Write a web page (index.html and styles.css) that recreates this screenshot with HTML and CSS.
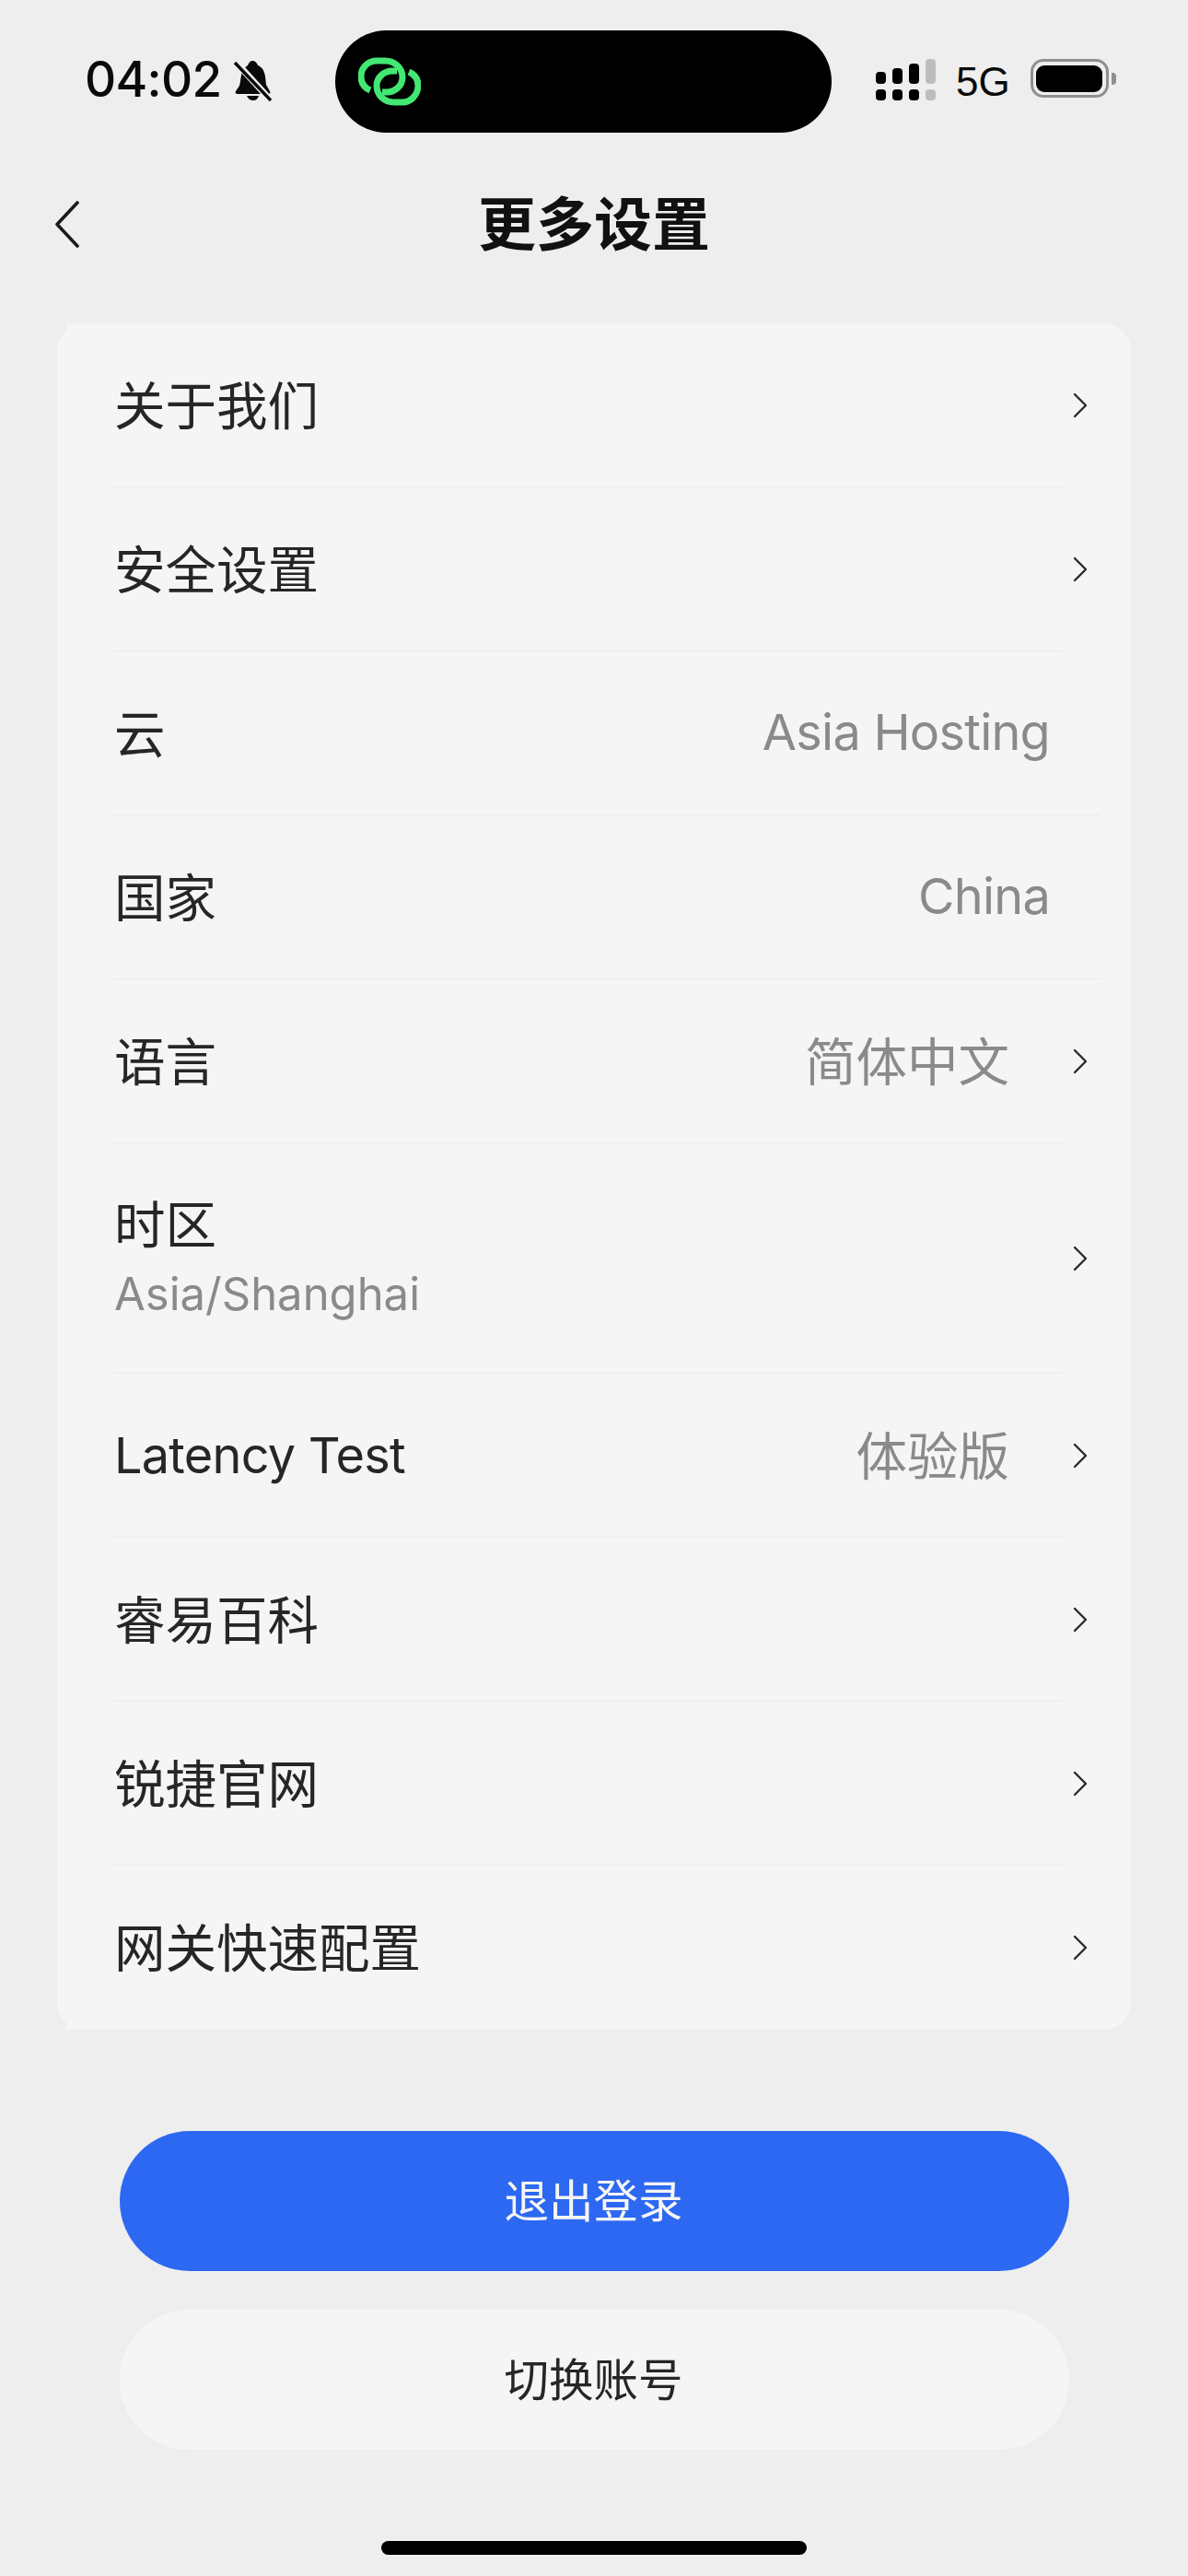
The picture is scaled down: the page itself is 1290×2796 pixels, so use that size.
FILE: index.html
```html
<!DOCTYPE html>
<html lang="zh-CN">
  <head>
    <meta charset="UTF-8" />
    <meta name="viewport" content="width=device-width, initial-scale=1.0" />
    <title>更多设置</title>
    <link rel="stylesheet" href="styles.css">
  </head>

  <body>
    <div class="phone">
      <header class="status-bar">
        <div class="status-left">
          <span class="clock">04:02</span>
          <svg class="bell" viewBox="0 0 41 45" aria-hidden="true">
            <path d="M20 1c3 0 5 2 6 5 5 2 7 6 8 12l1 9 4 7c1 2 0 3-2 3H4c-2 0-3-1-2-3l4-6c1-3 1-7 2-11 1-6 4-9 7-11 1-3 3-5 5-5z" />
            <path d="M14 39h13c-1 3-3 5-6 5s-6-2-7-5z" />
            <path class="bell-gap" d="M0 0l41 45" />
            <path class="bell-slash" d="M1 3l39 41" />
          </svg>
        </div>
        <div class="island">
          <svg class="island-icon" viewBox="0 0 68 53" aria-hidden="true">
            <path d="M13 36C6 33 3 27 3 21 3 11 11 4 20 4h9c11 0 19 8 19 18 0 9-8 16-17 16h-5" />
            <path d="M55 16c7 3 10 9 10 15 0 10-8 18-17 18h-9C28 49 20 41 20 31c0-9 8-16 17-16h5" />
          </svg>
        </div>
        <div class="status-right">
          <div class="signal">
            <span class="bar bar-1"></span>
            <span class="bar bar-2"></span>
            <span class="bar bar-3"></span>
            <span class="bar bar-4 off"></span>
          </div>
          <span class="network">5G</span>
          <div class="battery"><span class="battery-level"></span></div>
          <span class="battery-nub"></span>
        </div>
      </header>

      <nav class="nav-bar">
        <svg class="back" viewBox="0 0 27 51" aria-hidden="true">
          <path d="M25 2L3 25.5 25 49" />
        </svg>
        <h1 class="nav-title">更多设置</h1>
      </nav>

      <section class="card">
        <ul class="settings">
          <li class="row">
            <span class="row-label">关于我们</span>
            <svg class="chevron" viewBox="0 0 16 28"><path d="M2 2l12 12L2 26" /></svg>
          </li>
          <li class="row">
            <span class="row-label">安全设置</span>
            <svg class="chevron" viewBox="0 0 16 28"><path d="M2 2l12 12L2 26" /></svg>
          </li>
          <li class="row row-plain">
            <span class="row-label">云</span>
            <span class="row-value latin">Asia Hosting</span>
          </li>
          <li class="row row-plain">
            <span class="row-label">国家</span>
            <span class="row-value latin">China</span>
          </li>
          <li class="row">
            <span class="row-label">语言</span>
            <span class="row-value">简体中文</span>
            <svg class="chevron" viewBox="0 0 16 28"><path d="M2 2l12 12L2 26" /></svg>
          </li>
          <li class="row row-tall">
            <div class="row-stack">
              <span class="row-label">时区</span>
              <span class="row-sub">Asia/Shanghai</span>
            </div>
            <svg class="chevron" viewBox="0 0 16 28"><path d="M2 2l12 12L2 26" /></svg>
          </li>
          <li class="row">
            <span class="row-label latin">Latency Test</span>
            <span class="row-value">体验版</span>
            <svg class="chevron" viewBox="0 0 16 28"><path d="M2 2l12 12L2 26" /></svg>
          </li>
          <li class="row">
            <span class="row-label">睿易百科</span>
            <svg class="chevron" viewBox="0 0 16 28"><path d="M2 2l12 12L2 26" /></svg>
          </li>
          <li class="row">
            <span class="row-label">锐捷官网</span>
            <svg class="chevron" viewBox="0 0 16 28"><path d="M2 2l12 12L2 26" /></svg>
          </li>
          <li class="row">
            <span class="row-label">网关快速配置</span>
            <svg class="chevron" viewBox="0 0 16 28"><path d="M2 2l12 12L2 26" /></svg>
          </li>
        </ul>
      </section>

      <div class="actions">
        <button class="btn btn-primary" type="button">退出登录</button>
        <button class="btn btn-light" type="button">切换账号</button>
      </div>

      <div class="home-bar"></div>
    </div>
  </body>
</html>
```

FILE: styles.css
```css
*,
*::before,
*::after {
  box-sizing: border-box;
}
:root {
  --bg: #eeeeee;
  --surface: #f5f5f5;
  --primary: #2d68f2;
  --text: #262626;
  --text-light: #8a8a8a;
  --line: #e9e9e9;
  --font: "Inter", "Noto Sans CJK SC", sans-serif;
}
body {
  margin: 0;
  font-family: var(--font);
  background: var(--bg);
  color: var(--text);
}
.phone {
  height: 2796px;
  display: flex;
  flex-direction: column;
}

/* status bar */
.status-bar {
  height: 144px;
  padding: 33px 0 0 92px;
  display: flex;
  align-items: flex-start;
}
.status-left {
  width: 272px;
  height: 111px;
  display: flex;
  align-items: center;
  gap: 14px;
}
.clock {
  font-size: 53px;
  font-weight: 550;
  color: #0a0a0a;
  letter-spacing: -0.7px;
  margin-top: -5px;
}
.bell {
  width: 41px;
  height: 45px;
  margin-top: -3px;
  fill: #0a0a0a;
}
.bell-gap {
  fill: none;
  stroke: var(--bg);
  stroke-width: 7;
}
.bell-slash {
  fill: none;
  stroke: #0a0a0a;
  stroke-width: 3.4;
}
.island {
  width: 539px;
  height: 111px;
  background: #000;
  border-radius: 56px;
  padding: 29px 0 0 25px;
}
.island-icon {
  display: block;
  width: 68px;
  height: 53px;
  fill: none;
  stroke: #42e872;
  stroke-width: 7;
  stroke-linecap: butt;
}
.status-right {
  margin-left: 48px;
  height: 76px;
  padding-top: 31px;
  display: flex;
  align-items: flex-start;
}
.signal {
  width: 65px;
  height: 45px;
  display: flex;
  justify-content: space-between;
  align-items: flex-end;
}
.bar {
  width: 11px;
  border-radius: 4px;
  background: #000;
  position: relative;
  margin-bottom: 18px;
}
.bar::after {
  content: "";
  position: absolute;
  left: 0;
  right: 0;
  bottom: -18px;
  height: 12px;
  border-radius: 4px;
  background: inherit;
}
.bar-1 { height: 13px; }
.bar-2 { height: 17px; }
.bar-3 { height: 22px; }
.bar-4 { height: 27px; }
.off { background: #bdbdbd; }
.network {
  margin-left: 22px;
  font-family: "Liberation Sans", sans-serif;
  font-size: 44px;
  line-height: 44px;
  color: #0a0a0a;
  margin-top: 3px;
}
.battery {
  margin-left: 22px;
  width: 85px;
  height: 42px;
  border: 3.5px solid #8f8f8f;
  border-radius: 14px;
  padding: 3.5px;
}
.battery-level {
  display: block;
  height: 100%;
  background: #000;
  border-radius: 9px;
}
.battery-nub {
  width: 5px;
  height: 13px;
  margin: 15px 0 0 3px;
  background: #8f8f8f;
  border-radius: 0 4px 4px 0;
}

/* nav */
.nav-bar {
  height: 207px;
  padding: 0 0 0 59px;
  display: flex;
  align-items: flex-start;
  position: relative;
}
.back {
  width: 27px;
  height: 51px;
  margin-top: 74px;
  fill: none;
  stroke: #1a1a1a;
  stroke-width: 3.6;
  stroke-linecap: round;
  stroke-linejoin: round;
}
.nav-title {
  flex: 1;
  margin: 57px 86px 0 0;
  text-align: center;
  font-size: 63px;
  line-height: 84px;
  font-weight: 700;
  color: #111;
}

/* list */
.card {
  margin: 0 62px;
  background: var(--surface);
  border-radius: 30px;
  padding-left: 10px;
}
.settings {
  margin: 0;
  padding: 0 0 0 52px;
  list-style: none;
  background: var(--surface);
  border-radius: 0 30px 30px 0;
}
.row {
  height: 178px;
  display: flex;
  align-items: center;
  position: relative;
  font-size: 55.5px;
}
.row::after {
  content: "";
  position: absolute;
  left: 0;
  bottom: 0;
  width: 1029px;
  height: 1.5px;
  background: var(--line);
}
.row-plain::after {
  width: 1070px;
}
.row:last-child::after {
  display: none;
}
.row-tall {
  height: 250px;
}
.row-label,
.row-value {
  flex: none;
  white-space: nowrap;
  padding-bottom: 7px;
}
.latin {
  font-size: 54px;
  letter-spacing: -0.75px;
  padding-bottom: 3px;
}
.row-label.latin {
  padding-bottom: 1px;
}
.row-stack {
  display: flex;
  flex-direction: column;
  padding-bottom: 3px;
}
.row-stack .row-label {
  line-height: 80px;
  padding-bottom: 0;
}
.row-sub {
  font-size: 49px;
  line-height: 70px;
  color: var(--text-light);
}
.row-value {
  margin-left: auto;
  color: var(--text-light);
}
.row-plain {
  padding-right: 88px;
}
.row .row-value + .chevron {
  margin-left: 69px;
}
.chevron {
  margin-left: auto;
  margin-right: 47px;
  flex: none;
  width: 16px;
  height: 28px;
  fill: none;
  stroke: #2a2a2a;
  stroke-width: 2.4;
  stroke-linecap: round;
  stroke-linejoin: round;
}

/* buttons */
.actions {
  margin: 110px 129px 0 130px;
  display: flex;
  flex-direction: column;
  gap: 42px;
}
.btn {
  height: 152px;
  border: 0;
  border-radius: 76px;
  font-family: var(--font);
  font-size: 48.5px;
  padding: 0 2px 6px 0;
}
.btn-primary {
  background: var(--primary);
  color: #f5f5f5;
}
.btn-light {
  background: var(--surface);
  color: var(--text);
}
.home-bar {
  width: 462px;
  height: 15px;
  margin: 99px auto 0;
  background: #000;
  border-radius: 8px;
}
```
